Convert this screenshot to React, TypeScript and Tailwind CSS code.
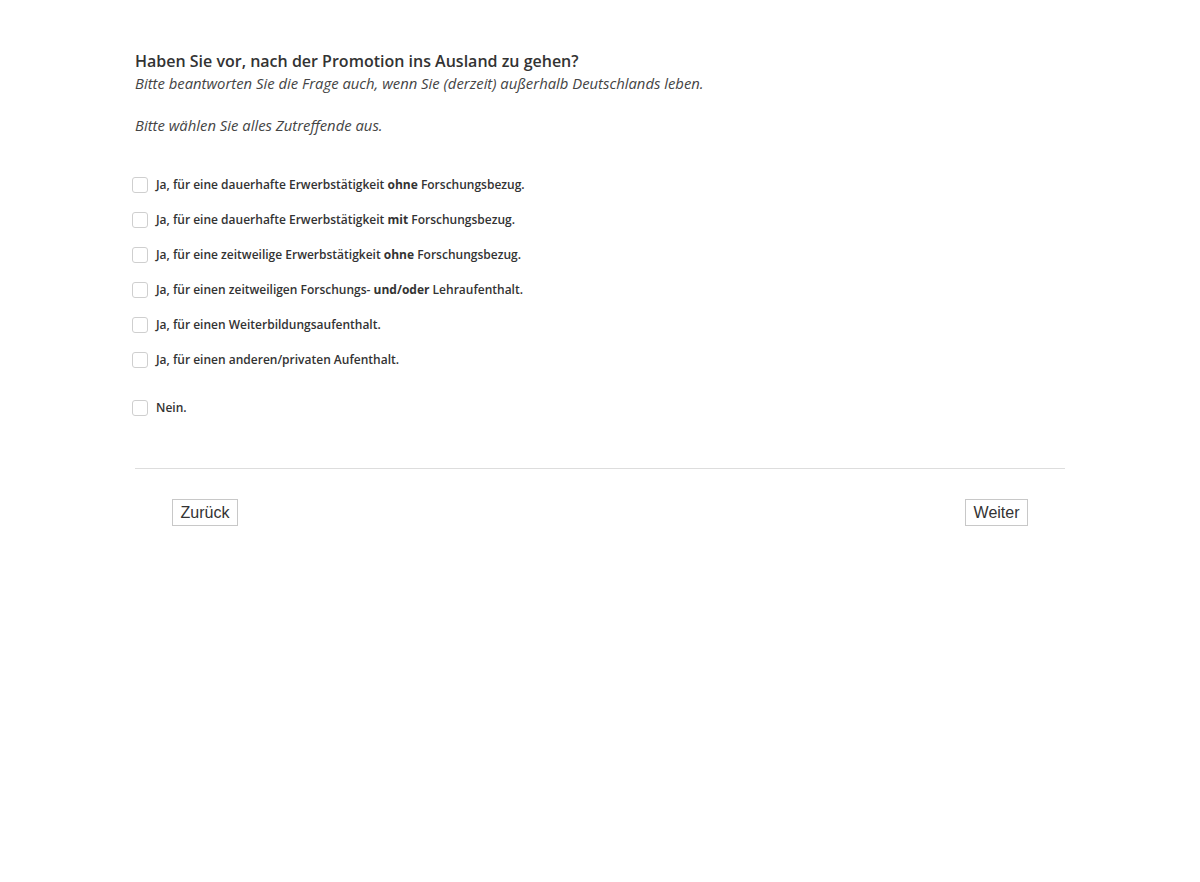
const options: { pre: string; bold: string; post: string }[] = [
  { pre: "Ja, für eine dauerhafte Erwerbstätigkeit ", bold: "ohne", post: " Forschungsbezug." },
  { pre: "Ja, für eine dauerhafte Erwerbstätigkeit ", bold: "mit", post: " Forschungsbezug." },
  { pre: "Ja, für eine zeitweilige Erwerbstätigkeit ", bold: "ohne", post: " Forschungsbezug." },
  { pre: "Ja, für einen zeitweiligen Forschungs- ", bold: "und/oder", post: " Lehraufenthalt." },
  { pre: "Ja, für einen Weiterbildungsaufenthalt.", bold: "", post: "" },
  { pre: "Ja, für einen anderen/privaten Aufenthalt.", bold: "", post: "" },
];

function Option({ children }: { children: React.ReactNode }) {
  return (
    <label className="flex items-center h-[35px] cursor-pointer">
      <span className="w-4 h-4 ml-[-3px] rounded-[3px] border border-[#cfcfcf] bg-white shrink-0" />
      <span className="ml-2 text-[12px] font-semibold text-[#333]">{children}</span>
    </label>
  );
}

export default function App() {
  return (
    <div
      className="min-h-screen bg-white text-[#333]"
      style={{ fontFamily: '"Open Sans", "Noto Sans", sans-serif' }}
    >
      <div className="w-[930px] ml-[135px] pt-[50px]">
        <h1 className="text-[16px] font-semibold leading-[22px] text-[#333]">
          Haben Sie vor, nach der Promotion ins Ausland zu gehen?
        </h1>
        <p className="text-[14.85px] italic leading-[22px] text-[#444]">
          Bitte beantworten Sie die Frage auch, wenn Sie (derzeit) außerhalb Deutschlands leben.
        </p>
        <p className="mt-[20px] text-[14.85px] italic leading-[22px] text-[#444]">
          Bitte wählen Sie alles Zutreffende aus.
        </p>

        <div className="mt-[31px]">
          {options.map((o, i) => (
            <Option key={i}>
              {o.pre}
              {o.bold && <b className="font-bold">{o.bold}</b>}
              {o.post}
            </Option>
          ))}
          <div className="mt-[13px]">
            <Option>Nein.</Option>
          </div>
        </div>

        <div className="mt-[43px] border-t border-[#ddd]" />

        <div
          className="flex justify-between pl-[37px] pr-[37px] mt-[30px]"
          style={{ fontFamily: '"Liberation Sans", Arial, sans-serif' }}
        >
          <button className="h-[27px] px-[7.5px] border border-[#c8c8c8] bg-white text-[16px] text-[#333] leading-none">
            Zurück
          </button>
          <button className="h-[27px] px-[7.5px] border border-[#c8c8c8] bg-white text-[16px] text-[#333] leading-none">
            Weiter
          </button>
        </div>
      </div>
    </div>
  );
}
